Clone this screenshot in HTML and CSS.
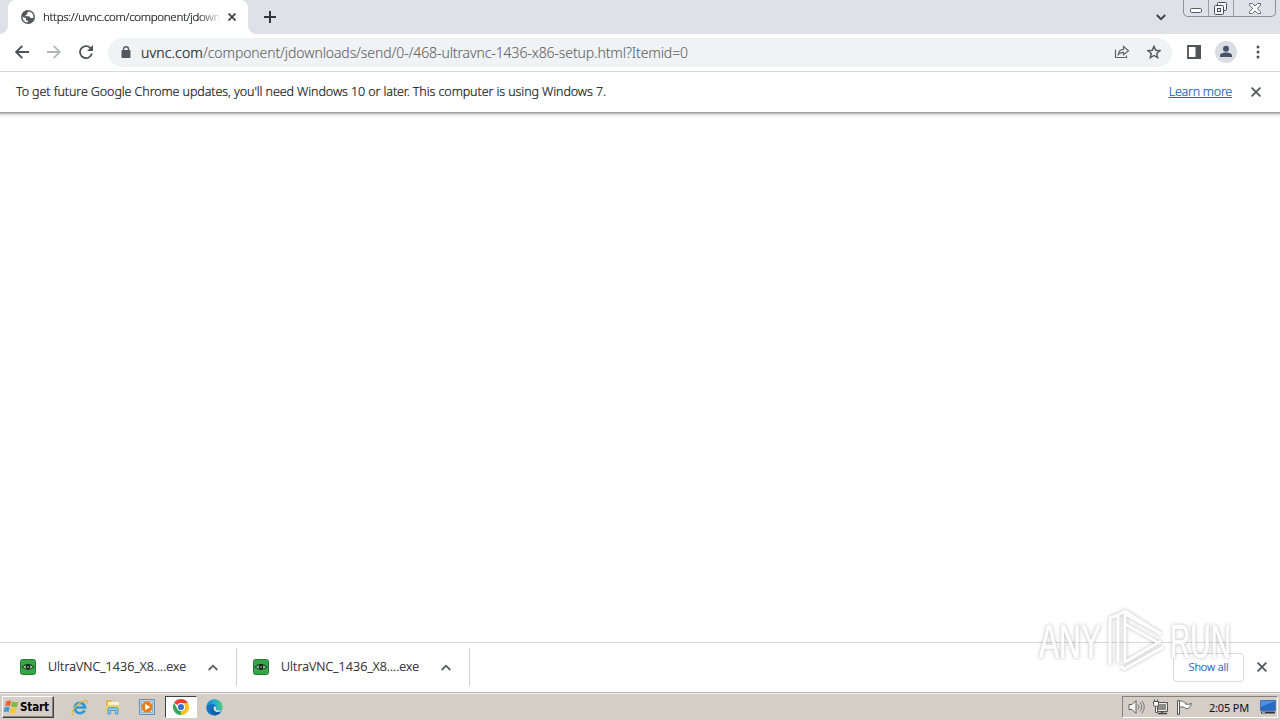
FILE: index.html
```html
<!DOCTYPE html>
<html lang="en">
<head>
<meta charset="utf-8">
<title>uvnc.com</title>
<link rel="stylesheet" href="styles.css">
</head>
<body>
<div class="screen">
  <header class="tabstrip">
    <div class="tab">
      <svg class="globe" width="14" height="14" viewBox="0 0 14 14"><circle cx="7" cy="7" r="7" fill="#54585d"/><path d="M1.5 6.8 5 8.2v2l1.8.4v2C3.5 12.4 1.3 9.8 1.5 6.8ZM7.5 1.4 6.2 3v1.4L4.5 5v1.2h3.7L9.5 8h2.9C13 4.6 11 1.8 7.5 1.4Z" fill="#fff"/></svg>
      <span class="tab-title">https://uvnc.com/component/jdown</span>
      <svg class="tab-close" width="8" height="8" viewBox="0 0 8 8"><path d="M.5.5l7 7m0-7l-7 7" stroke="#3c4043" stroke-width="1.7"/></svg>
    </div>
    <svg class="new-tab" width="12" height="12" viewBox="0 0 12 12"><path d="M6 0v12M0 6h12" stroke="#33373c" stroke-width="2"/></svg>
    <svg class="tab-search" width="10" height="7" viewBox="0 0 10 7"><path d="M.8 1 5 5.2 9.2 1" fill="none" stroke="#3c4043" stroke-width="1.8"/></svg>
    <div class="window-buttons">
      <span class="wb min"><svg width="12" height="5" viewBox="0 0 12 5"><rect x=".5" y=".5" width="11" height="4" rx="1" fill="#fff" stroke="#555a64"/></svg></span>
      <span class="wb max"><svg width="13" height="13" viewBox="0 0 13 13"><g fill="#f4f5f7" stroke="#474c55"><rect x="3.5" y=".5" width="9" height="8" rx="1"/><rect x=".5" y="3.5" width="9" height="9" rx="1"/><rect x="3.5" y="6.5" width="3" height="3"/></g></svg></span>
      <span class="wb cls"><svg width="12" height="11" viewBox="0 0 12 11"><path d="M.5.5h3L6 3 8.500.5h3v2L8.200 5.500l3.300 3v2h-3L6 8l-2.500 2.500h-3v-2l3.300-3L.5 2.500Z" fill="#fff" stroke="#686d76"/></svg></span>
    </div>
  </header>
  <nav class="toolbar">
    <svg class="back" width="14" height="14" viewBox="0 0 14 14"><path d="M14 7H1.500M7.300.8 1.200 7l6.100 6.200" fill="none" stroke="#4f5358" stroke-width="1.900"/></svg>
    <svg class="forward" width="14" height="14" viewBox="0 0 14 14"><path d="M0 7h12.500M6.700.8 12.800 7l-6.100 6.200" fill="none" stroke="#b4b6b9" stroke-width="1.800"/></svg>
    <svg class="reload" width="14" height="14" viewBox="0 0 14 14"><path d="M12.900 8.500A6 6 0 1 1 11.200 2.800L12.700 4.300" fill="none" stroke="#4f5358" stroke-width="1.800"/><path d="M14 0v6H8Z" fill="#4f5358"/></svg>
    <div class="omnibox">
      <svg class="lock" width="10" height="12" viewBox="0 0 10 12"><path d="M2.500 5V3.300a2.500 2.500 0 0 1 5 0V5" fill="none" stroke="#54585d" stroke-width="1.400"/><rect x=".5" y="4" width="9" height="8" rx="1" fill="#54585d"/></svg>
      <span class="url"><b>uvnc.com</b><span class="path">/component/jdownloads/send/0-/468-ultravnc-1436-x86-setup.html?Itemid=0</span></span>
      <svg class="share" width="16" height="14" viewBox="0 0 16 14"><path d="M1.500 4.500v8h11V10.500M4.300 9.500C4.700 6 6.500 4.500 9.500 4.400V1.500l5 4.300-5 4V7.300C7 7.200 5.500 8 4.300 9.500Z" fill="none" stroke="#5f6368" stroke-width="1.200"/></svg>
      <svg class="star" width="14" height="14" viewBox="0 0 14 14"><path d="m7 1.300 1.700 4 4.200.4-3.200 2.800 1 4.200L7 10.500l-3.700 2.200 1-4.200L1.100 5.700l4.200-.4Z" fill="none" stroke="#54585d" stroke-width="1.400"/></svg>
    </div>
    <svg class="panel" width="14" height="14" viewBox="0 0 14 14"><path d="M1 1h12v12H1Z" fill="none" stroke="#505459" stroke-width="1.800"/><path d="M8.500 0H14v14H8.500Z" fill="#505459"/></svg>
    <svg class="avatar" width="22" height="22" viewBox="0 0 22 22"><circle cx="11" cy="11" r="11" fill="#dadde3"/><circle cx="11" cy="7.800" r="3" fill="#47536b"/><path d="M5 16v-1.500c0-2 3-3 6-3s6 1 6 3V16Z" fill="#47536b"/></svg>
    <svg class="menu" width="4" height="14" viewBox="0 0 4 14"><g fill="#505459"><circle cx="2" cy="2" r="1.500"/><circle cx="2" cy="7" r="1.500"/><circle cx="2" cy="12" r="1.500"/></g></svg>
  </nav>
  <section class="infobar">
    <span class="message">To get future Google Chrome updates, you'll need Windows 10 or later. This computer is using Windows 7.</span>
    <a class="learn">Learn more</a>
    <svg width="10" height="10" viewBox="0 0 10 10"><path d="M.6.600l8.800 8.800m0-8.800L.6 9.400" stroke="#54585d" stroke-width="1.800"/></svg>
  </section>
  <main class="page"></main>
  <footer class="shelf">
    <div class="download">
      <svg width="16" height="16" viewBox="0 0 16 16"><rect x=".5" y=".5" width="15" height="15" rx="2" fill="#35a845" stroke="#28753a"/><path d="M1.500 8Q8 1.500 14.500 8 8 14 1.500 8Z" fill="#193b20"/><path d="M3 8q5-4 10 0-5 4-10 0Z" fill="#b9d8bb"/><circle cx="8" cy="8" r="2.400" fill="#122518"/><circle cx="8" cy="8" r=".8" fill="#d6e9d5"/></svg>
      <span class="file">UltraVNC_1436_X8....exe</span>
      <svg class="chev" width="10" height="7" viewBox="0 0 10 7"><path d="M.7 6 5 1.700 9.300 6" fill="none" stroke="#5b5f64" stroke-width="1.800"/></svg>
    </div>
    <div class="download">
      <svg width="16" height="16" viewBox="0 0 16 16"><rect x=".5" y=".5" width="15" height="15" rx="2" fill="#35a845" stroke="#28753a"/><path d="M1.500 8Q8 1.500 14.500 8 8 14 1.500 8Z" fill="#193b20"/><path d="M3 8q5-4 10 0-5 4-10 0Z" fill="#b9d8bb"/><circle cx="8" cy="8" r="2.400" fill="#122518"/><circle cx="8" cy="8" r=".8" fill="#d6e9d5"/></svg>
      <span class="file">UltraVNC_1436_X8....exe</span>
      <svg class="chev" width="10" height="7" viewBox="0 0 10 7"><path d="M.7 6 5 1.700 9.300 6" fill="none" stroke="#5b5f64" stroke-width="1.800"/></svg>
    </div>
    <span class="show-all">Show all</span>
    <svg class="shelf-close" width="10" height="10" viewBox="0 0 10 10"><path d="M.6.600l8.800 8.800m0-8.800L.6 9.400" stroke="#54585d" stroke-width="1.800"/></svg>
  </footer>
  <div class="taskbar">
    <div class="start">
      <svg width="17" height="16" viewBox="0 0 17 16"><path d="M3.500 2.200Q6 .8 8.300 2L7 7.200Q4.500 6 2 7.300Z" fill="#e86430"/><path d="M9.300 2.500q2.700 1.300 6 .2L14 7.900q-3 1-6-.3Z" fill="#82b944"/><path d="M1.800 8.200q2.700-1.100 5 .1l-1.300 5Q3 12 .5 13.200Z" fill="#409bd8"/><path d="M7.700 8.600q3 1.300 6 .4l-1.400 5q-3 1.100-5.900-.2Z" fill="#f7c82f"/></svg>
      <span>Start</span>
    </div>
    <svg class="ie" width="18" height="17" viewBox="0 0 18 17"><path d="M13.600 11.300A5.200 5.200 0 1 1 14.100 8.500H5" fill="none" stroke="#299bd7" stroke-width="2.700"/><path d="M3 15.800C-1 16 1.800 9.500 7 5.300 11.500 1.500 17.500-.5 16.400 4.500" fill="none" stroke="#e4b83b" stroke-width="1.300"/></svg>
    <svg class="explorer" width="16" height="16" viewBox="0 0 16 16"><path d="M1 1h5l1 2h7v10H1Z" fill="#e0b450"/><path d="M3 3h11v6H3Z" fill="#faf3c5"/><path d="M.5 6h14v7H.5Z" fill="#f0d06b"/><path d="M3 15V10q0-1.500 1.500-1.500h7Q13 8.500 13 10v5h-2.500v-3.500h-5V15Z" fill="#8ac7e8" stroke="#3f91c5" stroke-width=".8"/></svg>
    <svg class="media" width="16" height="16" viewBox="0 0 16 16"><path d="M.5.500h15v15H.5Z" fill="#b8d4ec" stroke="#5c91bd"/><path d="M2.500 2.500h11v11h-11Z" fill="#d5e5f2" stroke="#8fb6d4"/><circle cx="8" cy="8" r="5.600" fill="#ee7d13"/><path d="m6.200 4.700 5 3.300-5 3.300Z" fill="#fff"/></svg>
    <div class="active-task">
      <svg width="16" height="16" viewBox="0 0 16 16"><path d="M8 8 1.070 4A8 8 0 0 1 14.930 4Z" fill="#e64235"/><path d="M8 8V4h6.930A8 8 0 0 1 8 16Z" fill="#f9c51d"/><path d="M8 8 8 16A8 8 0 0 1 1.070 4L4.500 10Z" fill="#35a853"/><path d="m11.500 10-3.500 6A8 8 0 0 0 15.900 8H12Z" fill="#f9c51d"/><circle cx="8" cy="8" r="4" fill="#fff"/><circle cx="8" cy="8" r="3.100" fill="#3d73d5"/></svg>
    </div>
    <svg class="edge" width="17" height="17" viewBox="0 0 17 17"><defs><linearGradient id="edge-top"><stop stop-color="#1683d5"/><stop offset=".6" stop-color="#29b4ca"/><stop offset="1" stop-color="#55cc70"/></linearGradient></defs><circle cx="8.300" cy="8.500" r="8" fill="#1473bf"/><path d="M.3 8.500C1 3.500 4 .5 8.500.5c5 0 8 3.500 8 7 0 2.500-2 4-4.500 4-2 0-2.500-1-2-1.700C11.500 7.500 9.500 5 6 5 3 5 1 6.500.3 8.500Z" fill="url(#edge-top)"/><path d="M7.200 7.700C6.500 12 10.500 14.500 14.800 13A8 8 0 0 1 9 16.500C4.500 14.700 4.500 9 7.200 7.700Z" fill="#1759a2"/><path d="M8.500 7.200c1.500 0 2 1.400 1.500 2.600-.5 1.600 2.500 2.500 6.500.8-1 3-7 3.500-8.500.5-.7-1.500-.5-2.800.5-3.900Z" fill="#d8dcda"/></svg>
    <div class="tray">
      <svg class="sound" width="17" height="16" viewBox="0 0 17 16"><path d="M1 5.500h3L8 1.500v13L4 10.500H1Z" fill="#f8f8f6" stroke="#5e5e5a"/><path d="M10 5.500q2 2.500 0 5M12 3.500q3.500 4.500 0 9M14 1.800q4.500 6.200 0 12.400" fill="none" stroke="#777"/></svg>
      <svg class="network" width="17" height="16" viewBox="0 0 17 16"><path d="M4.500 3.500h11v9h-11Z" fill="#8b8b89" stroke="#555"/><path d="M5.500 4.500h9v7h-9Z" fill="none" stroke="#eee"/><path d="M6 14.500h9M10 12.500v2" stroke="#444" stroke-width="1.500"/><path d="M1.500 2.500h5v3q0 2-2.500 2t-2.500-2ZM2.500.500v2M5.500.500v2M3.500 7.500v6h2v-6" fill="#fff" stroke="#555"/></svg>
      <svg class="flag" width="17" height="16" viewBox="0 0 17 16"><path d="M3.500 2.500c3-1.500 4 1 6 1.500v1q3 1 6-.5-1 4-3.500 5-2 .7-3.500-1-2.500-1.500-5 0Z" fill="#fff" stroke="#666"/><path d="M1.500 1.500h2v14h-2Z" fill="#fff" stroke="#555"/></svg>
      <span class="clock">2:05 PM</span>
      <svg class="desktop" width="16" height="14" viewBox="0 0 16 14"><path d="M.5.500h15v10H.5Z" fill="#266bc4" stroke="#4773b0"/><path d="M1 1h14L1 7Z" fill="#4f91df"/><path d="M1 11.500h14v2H1Z" fill="#28343f"/><path d="M2 12.500h3" stroke="#9db7cd"/></svg>
    </div>
  </div>
  <svg class="watermark" width="210" height="76" viewBox="0 0 210 76">
    <g class="mark">
      <text x="9" y="56" textLength="62" lengthAdjust="spacingAndGlyphs">ANY</text>
      <text x="140" y="56" textLength="61" lengthAdjust="spacingAndGlyphs">RUN</text>
      <path d="M80 63V16l8-3v48M91 64l3 3 39-22M88 13l7-4 36 23"/>
      <path d="M131 32 95 12v48l36-21M95 22l32 18"/>
    </g>
  </svg>
</div>
</body>
</html>
```
FILE: styles.css
```css
* { box-sizing: border-box; }
body { margin: 0; overflow: hidden; font-family: "Noto Sans", "Open Sans", sans-serif; font-weight: 350; color: #15171a; background: #fff; }
svg { display: block; flex: none; }
.screen { position: relative; width: 1280px; height: 720px; display: flex; flex-direction: column; }
.tabstrip { height: 34px; flex: none; background: #dee1e6; display: flex; align-items: flex-start; padding-left: 8px; }
.tab { position: relative; width: 240px; height: 34px; background: #fff; border-radius: 8px 8px 0 0; display: flex; align-items: center; padding-left: 13px; }
.tab::before, .tab::after { content: ""; position: absolute; bottom: 0; width: 8px; height: 8px; }
.tab::before { left: -8px; background: radial-gradient(circle at 0 0, transparent 7.5px, #fff 8px); }
.tab::after { right: -8px; background: radial-gradient(circle at 100% 0, transparent 7.5px, #fff 8px); }
.tab-title { width: 176px; margin-left: 8px; white-space: nowrap; font-size: 11.5px; line-height: 18px; letter-spacing: -.32px; -webkit-text-stroke: .2px; -webkit-mask-image: linear-gradient(to right, #000 155px, rgba(0,0,0,.15) 176px); }
.tab-close { margin-left: 9px; }
.new-tab { margin: 11px 0 0 16px; }
.tab-search { margin: 14px 17px 0 auto; }
.window-buttons { display: flex; width: 93px; height: 17px; margin-right: 4px; border: 1px solid #8b8f99; border-top: 0; border-radius: 0 0 5px 5px; }
.wb { display: flex; justify-content: center; border-right: 1px solid #9a9ea8; }
.min { width: 25px; padding-top: 8px; }
.max { width: 25px; padding-top: 2px; padding-right: 1px; }
.cls { flex: 1; padding-top: 3px; border: 0; }
.toolbar { height: 38px; flex: none; display: flex; align-items: center; padding: 0 20px 1px 15px; border-bottom: 1px solid #d6d8da; }
.forward { margin-left: 18px; }
.reload { margin-left: 18px; }
.omnibox { width: 1064px; height: 29px; margin-left: 15px; border-radius: 15px; background: #f0f3f5; display: flex; align-items: center; padding: 0 11px 0 13px; }
.url { margin-left: 10px; padding-top: 1px; font-size: 14px; line-height: 20px; color: #5f6368; white-space: nowrap; font-weight: 300; }
.url b { font-weight: 350; color: #202124; letter-spacing: .15px; -webkit-text-stroke: .2px; }
.path { letter-spacing: -.1px; -webkit-text-stroke: .1px; }
.share { margin-left: auto; }
.star { margin-left: 17px; }
.panel { margin-left: 15px; }
.avatar { margin-left: 14px; }
.menu { margin-left: auto; }
.infobar { height: 41px; flex: none; display: flex; align-items: center; padding: 0 19px 1px 16px; font-size: 12.5px; line-height: 18px; border-bottom: 1px solid #a2a2a2; box-shadow: 0 1px 0 #bcbcbc, 0 2px 0 #dedede, 0 3px 0 #eee, 0 5px 2px #f8f8f8; -webkit-text-stroke: .2px; }
.message { white-space: nowrap; letter-spacing: -.09px; }
.learn { margin-left: auto; margin-right: 19px; color: #1865bc; text-decoration: underline; letter-spacing: -.25px; }
.page { flex: 1; }
.shelf { height: 50px; flex: none; display: flex; align-items: center; border-top: 1px solid #d6d8da; padding: 0 13px 1px 0; }
.download { width: 237px; height: 38px; display: flex; align-items: center; padding-left: 20px; border-right: 1px solid #d0d2d4; }
.download + .download { width: 233px; padding-left: 16px; }
.file { width: 140px; margin-left: 12px; font-size: 12.5px; line-height: 18px; letter-spacing: .07px; white-space: nowrap; -webkit-text-stroke: .2px; }
.chev { margin-left: 20px; }
.show-all { width: 71px; height: 29px; margin-left: auto; padding-bottom: 1px; display: flex; align-items: center; justify-content: center; border: 1px solid #d8dadd; border-radius: 4px; font-size: 11px; letter-spacing: -.1px; color: #1259c4; -webkit-text-stroke: .2px; }
.shelf-close { margin-left: 13px; }
.taskbar { height: 28px; flex: none; background: #d4cec6; border-top: 1px solid #b9b7b2; box-shadow: inset 0 1px #f2f0ec; display: flex; align-items: center; padding: 1px 2px 0 2px; }
.start { width: 52px; height: 22px; display: flex; align-items: center; border: 1px solid; border-color: #fff #404040 #404040 #fff; box-shadow: inset -1px -1px #85817b; font: bold 11.5px/14px "DejaVu Sans Condensed", sans-serif; letter-spacing: -.1px; color: #000; }
.ie { margin-left: 17px; }
.explorer { margin-left: 16px; }
.media { margin-left: 18px; }
.active-task { width: 32px; height: 22px; margin-left: 10px; display: flex; align-items: center; justify-content: center; background: #fff; border: 1px solid; border-color: #404040 #fff #fff #404040; }
.edge { margin-left: 9px; }
.tray { width: 156px; height: 22px; margin-left: auto; display: flex; align-items: center; border: 1px solid; border-color: #85817b #fff #fff #85817b; padding-left: 5px; }
.network { margin-left: 7px; }
.flag { margin-left: 7px; }
.clock { width: 42px; margin-left: 16px; font-size: 11px; font-weight: 400; line-height: 15px; letter-spacing: -.2px; color: #111; white-space: nowrap; }
.desktop { margin-left: 9px; }
.watermark { position: absolute; left: 1030px; top: 602px; pointer-events: none; }
.mark { filter: drop-shadow(0 0 1px rgba(0,0,0,.22)) drop-shadow(0 0 2px rgba(0,0,0,.22)); opacity: .75; }
.mark text { font: 48px "Liberation Sans", sans-serif; fill: #fff; stroke: #fff; stroke-width: .7px; }
.mark path { fill: none; stroke: #fff; stroke-width: 3px; stroke-linejoin: round; }
```
